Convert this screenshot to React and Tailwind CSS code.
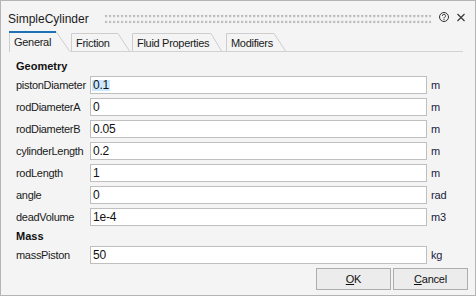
import React from "react";

const FONT = "font-['Liberation_Sans',Arial,sans-serif]";

function Tab({ label, w, h, top, selected, className = "" }) {
  return (
    <div
      className={`relative flex-none ${selected ? "-mb-px bg-[#f4f4f4] pt-[4px]" : "pt-[3px]"} pl-[5px] ${className}`}
      style={{ width: w, height: h }}
    >
      <svg className="absolute left-0 top-0" width={w} height={h} viewBox={`0 0 ${w} ${h}`}>
        <path
          d={`M0.5 ${h} V0.5 H${top} L${w - 0.5} ${h - (selected ? 1 : 0)}`}
          fill="none"
          stroke="#cdcdcd"
          strokeWidth="1"
        />
        {selected && <rect x="0" y="0" width={top} height="2" fill="#1f70b4" />}
      </svg>
      <span className="relative block text-[11px] leading-[14px] tracking-[-0.3px] text-[#1a1a1a]">
        {label}
      </span>
    </div>
  );
}

function Row({ label, value, unit, selected, first }) {
  return (
    <div className={`flex items-center h-[18px] ${first ? "mt-[3px]" : "mt-[4px]"}`}>
      <div className="w-[74px] flex-none text-[11px] leading-[14px] tracking-[-0.3px] text-[#1a1a1a]">
        {label}
      </div>
      <div className="w-[337px] h-[18px] flex-none border border-[#bfbfbf] bg-white flex items-center pl-[1px]">
        <span
          className={`text-[12px] leading-[11px] tracking-[-0.2px] text-[#111] px-[1px] ${
            selected ? "bg-[#cce8ff]" : ""
          }`}
        >
          {value}
        </span>
      </div>
      <div className="ml-[4px] text-[11px] leading-[14px] tracking-[-0.2px] text-[#1a1a3a]">{unit}</div>
    </div>
  );
}

export default function App() {
  const geometry = [
    ["pistonDiameter", "0.1", "m", true],
    ["rodDiameterA", "0", "m"],
    ["rodDiameterB", "0.05", "m"],
    ["cylinderLength", "0.2", "m"],
    ["rodLength", "1", "m"],
    ["angle", "0", "rad"],
    ["deadVolume", "1e-4", "m3"],
  ];
  return (
    <div className={`${FONT} w-[476px] h-[296px] border border-[#b4b4b4] bg-[#f4f4f4] flex flex-col overflow-hidden`}>
      {/* title bar */}
      <div className="flex items-center h-[14px] mt-[11px] pl-[7px] pr-[9px]">
        <span className="text-[12px] leading-[14px] text-[#1a1a1a] flex-none">SimpleCylinder</span>
        <svg className="ml-[16px] flex-1" height="10" viewBox="0 0 326 10" preserveAspectRatio="xMinYMid slice">
          <defs>
            <pattern id="grip" x="0" y="0" width="4" height="10" patternUnits="userSpaceOnUse">
              <rect x="0" y="1" width="2" height="2" fill="#b2b2b2" />
              <rect x="0" y="7" width="2" height="2" fill="#b2b2b2" />
            </pattern>
          </defs>
          <rect x="0" y="0" width="326" height="10" fill="url(#grip)" />
        </svg>
        <svg className="ml-[7px] flex-none" width="12" height="14" viewBox="0 0 12 14">
          <circle cx="6" cy="5" r="4.5" fill="none" stroke="#333" strokeWidth="1" />
          <path d="M4.4 3.9 A1.6 1.5 0 1 1 6.6 5.2 C6.1 5.5 6 5.8 6 6.4" fill="none" stroke="#333" strokeWidth="1" />
          <rect x="5.5" y="7.1" width="1" height="1" fill="#333" />
        </svg>
        <svg className="ml-[6px] flex-none" width="10" height="14" viewBox="0 0 10 14">
          <path d="M1.5 2 L8.5 9 M8.5 2 L1.5 9" stroke="#333" strokeWidth="1.1" fill="none" />
        </svg>
      </div>

      {/* tab strip */}
      <div className="flex items-end h-[21px] mt-[5px] ml-[8px] mr-[12px] border-b border-[#d2d2d2]">
        <Tab label="General" w={61} h={21} top={47} selected />
        <Tab label="Friction" w={59} h={18} top={47} className="ml-[1px]" />
        <Tab label="Fluid Properties" w={90} h={18} top={79} className="ml-[2px]" />
        <Tab label="Modifiers" w={60} h={18} top={48} className="ml-[4px]" />
      </div>

      {/* content */}
      <div className="flex flex-col pl-[15px]">
        <div className="mt-[7px] h-[14px] text-[11px] leading-[14px] font-bold text-[#111]">Geometry</div>
        {geometry.map(([l, v, u, s], i) => (
          <Row key={l} label={l} value={v} unit={u} selected={s} first={i === 0} />
        ))}
        <div className="mt-[3px] h-[14px] text-[11px] leading-[14px] font-bold text-[#111]">Mass</div>
        <Row label="massPiston" value="50" unit="kg" first />
      </div>

      {/* buttons */}
      <div className="flex justify-end gap-[2px] mt-[4px] pr-[7px]">
        <button className="w-[75px] h-[22px] border border-[#adadad] bg-[#ececec] text-[11px] tracking-[-0.2px] text-[#111] flex items-center justify-center">
          <span><span className="underline">O</span>K</span>
        </button>
        <button className="w-[75px] h-[22px] border border-[#adadad] bg-[#ececec] text-[11px] tracking-[-0.2px] text-[#111] flex items-center justify-center">
          <span><span className="underline">C</span>ancel</span>
        </button>
      </div>
    </div>
  );
}
